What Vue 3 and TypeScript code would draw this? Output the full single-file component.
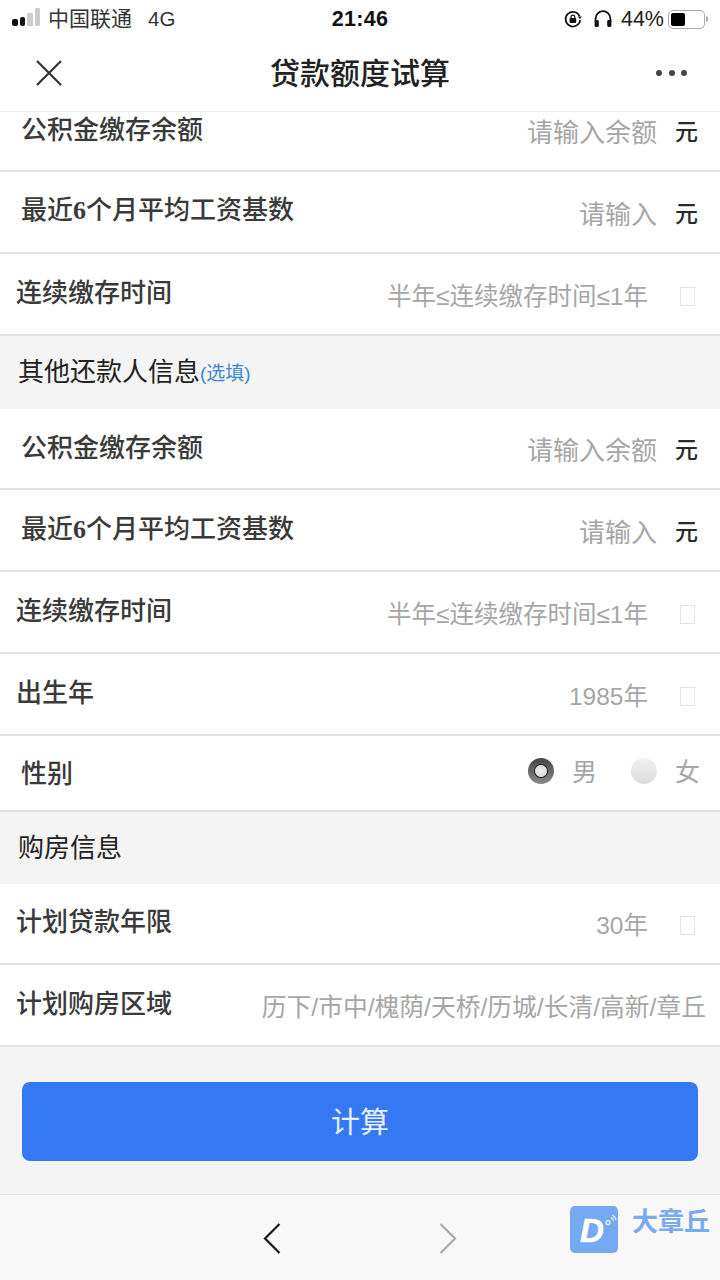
<template>
  <div class="page">
    <div class="status-bar">
      <div class="status-left">
        <span class="signal">
          <i class="bar on b1"></i><i class="bar on b2"></i><i class="bar b3"></i><i class="bar b4"></i>
        </span>
        <span class="carrier">中国联通</span>
        <span class="network">4G</span>
      </div>
      <div class="status-time">21:46</div>
      <div class="status-right">
        <svg class="lock-icon" width="20" height="20" viewBox="0 0 20 20">
          <path d="M16.6 7.2A7.3 7.3 0 1 0 17.2 11" fill="none" stroke="#111" stroke-width="1.7" />
          <path d="M14.6 7.4h4.4l-2.2 2.6z" fill="#111" />
          <rect x="6.6" y="9" width="6.6" height="5" rx="1" fill="#111" />
          <path d="M8 9.2V8a1.9 1.9 0 0 1 3.8 0v1.2" fill="none" stroke="#111" stroke-width="1.2" />
        </svg>
        <svg class="phones-icon" width="20" height="20" viewBox="0 0 20 20">
          <path d="M2.6 13V9.6a7.4 7.4 0 0 1 14.8 0V13" fill="none" stroke="#111" stroke-width="1.8" />
          <rect x="1.6" y="11" width="4.2" height="7" rx="1.4" fill="#111" />
          <rect x="14.2" y="11" width="4.2" height="7" rx="1.4" fill="#111" />
        </svg>
        <span class="battery-text">44%</span>
        <span class="battery"><i class="battery-fill"></i></span>
        <i class="battery-cap"></i>
      </div>
    </div>

    <header class="nav">
      <svg class="nav-close" width="28" height="28" viewBox="0 0 28 28">
        <path d="M2 2l24 24M26 2L2 26" stroke="#333" stroke-width="2.2" fill="none" />
      </svg>
      <h1 class="nav-title">贷款额度试算</h1>
      <div class="nav-more"><i></i><i></i><i></i></div>
    </header>

    <main class="scroller">
      <div class="form">
        <template v-for="block in blocks" :key="block.id">
          <div v-if="block.title" class="section-head" :class="block.headClass">
            {{ block.title }}<span v-if="block.note" class="section-note">{{ block.note }}</span>
          </div>
          <div v-for="row in block.rows" :key="row.label" class="row" :class="row.kind">
            <span class="row-label">
              <template v-for="part in splitLabel(row.label)" :key="part">
                <span v-if="/\d/.test(part)" class="row-digit">{{ part }}</span>
                <template v-else>{{ part }}</template>
              </template>
            </span>
            <template v-if="row.kind === 'gender'">
              <div class="gender">
                <span class="radio radio-on"></span><span class="gender-text">男</span>
                <span class="radio radio-off"></span><span class="gender-text">女</span>
              </div>
            </template>
            <template v-else>
              <span class="row-value">{{ row.value }}</span>
              <span v-if="row.kind === 'money'" class="row-unit">元</span>
              <span v-if="row.kind === 'pick'" class="row-check"></span>
            </template>
          </div>
        </template>
        <div class="submit-wrap">
          <button class="submit" type="button">计算</button>
        </div>
      </div>
    </main>

    <footer class="toolbar">
      <svg class="tool-back" width="20" height="32" viewBox="0 0 20 32">
        <path d="M17.5 2L3 16.5 17.5 31" fill="none" stroke="#1a1a1a" stroke-width="2.2" />
      </svg>
      <svg class="tool-forward" width="20" height="32" viewBox="0 0 20 32">
        <path d="M2.5 2L17 16.5 2.5 31" fill="none" stroke="#aaa" stroke-width="2.2" />
      </svg>
      <div class="watermark">
        <div class="logo-box">
          <span class="logo-d">D</span>
          <svg class="logo-wave" width="12" height="12" viewBox="0 0 12 12">
            <circle cx="3" cy="8.6" r="2" fill="none" stroke="#fff" stroke-width="1.1" />
            <path d="M6 3.6a5 5 0 0 1 2.6 3.2M7.6 1.2a7.6 7.6 0 0 1 3.4 4.6" fill="none" stroke="#fff" stroke-width="1.1" />
          </svg>
        </div>
        <span class="logo-name">大章丘</span>
      </div>
    </footer>
  </div>
</template>

<script setup lang="ts">
type RowKind = 'money' | 'pick' | 'gender' | 'plain'

interface Row {
  label: string
  value?: string
  kind: RowKind
}

interface Block {
  id: string
  title?: string
  note?: string
  headClass?: string
  rows: Row[]
}

const blocks: Block[] = [
  {
    id: 'main',
    rows: [
      { label: '公积金缴存余额', value: '请输入余额', kind: 'money' },
      { label: '最近6个月平均工资基数', value: '请输入', kind: 'money' },
      { label: '连续缴存时间', value: '半年≤连续缴存时间≤1年', kind: 'pick' },
    ],
  },
  {
    id: 'other',
    title: '其他还款人信息',
    note: '(选填)',
    rows: [
      { label: '公积金缴存余额', value: '请输入余额', kind: 'money' },
      { label: '最近6个月平均工资基数', value: '请输入', kind: 'money' },
      { label: '连续缴存时间', value: '半年≤连续缴存时间≤1年', kind: 'pick' },
      { label: '出生年', value: '1985年', kind: 'pick' },
      { label: '性别', kind: 'gender' },
    ],
  },
  {
    id: 'house',
    title: '购房信息',
    headClass: 'section-short',
    rows: [
      { label: '计划贷款年限', value: '30年', kind: 'pick' },
      { label: '计划购房区域', value: '历下/市中/槐荫/天桥/历城/长清/高新/章丘', kind: 'plain' },
    ],
  },
]

// digits in the labels are set in a bold serif, the rest stays CJK
const splitLabel = (label: string) => label.split(/(\d)/).filter(Boolean)
</script>

<style>
html,
body {
  margin: 0;
  background: #fff;
}
</style>

<style scoped>
.page {
  width: 720px;
  height: 1280px;
  display: flex;
  flex-direction: column;
  overflow: hidden;
  background: #f4f4f4;
  font-family: "Noto Sans CJK SC", "Noto Sans", sans-serif;
}

.status-bar {
  height: 38px;
  flex: none;
  display: flex;
  align-items: center;
  justify-content: space-between;
  background: #fff;
  color: #111;
  position: relative;
}

.status-left {
  display: flex;
  align-items: center;
  padding-left: 12px;
}

.signal {
  display: flex;
  align-items: flex-end;
  gap: 2px;
  height: 18px;
  margin-right: 8px;
  margin-bottom: 4px;
}

.bar {
  width: 5.5px;
  background: #ccc;
  border-radius: 1px;
}

.bar.on {
  background: #111;
}

.b1 { height: 7px; border-radius: 2px; }
.b2 { height: 9px; border-radius: 2px; }
.b3 { height: 13px; }
.b4 { height: 18px; }

.carrier {
  font-size: 21px;
  line-height: 20px;
  margin-bottom: 4px;
  color: #333;
}

.network {
  margin-left: 16px;
  font-family: "Liberation Sans", sans-serif;
  font-size: 20.5px;
  line-height: 20px;
  color: #333;
}

.status-time {
  position: absolute;
  left: 0;
  right: 0;
  text-align: center;
  font-family: "Liberation Sans", sans-serif;
  font-size: 21.5px;
  font-weight: 700;
  letter-spacing: 0.3px;
}

.status-right {
  display: flex;
  align-items: center;
  padding-right: 12px;
}

.phones-icon {
  margin-left: 10px;
}

.battery-text {
  margin-left: 8px;
  margin-right: 4px;
  font-family: "Liberation Sans", sans-serif;
  font-size: 21.5px;
  color: #222;
}

.battery {
  width: 37px;
  height: 19px;
  box-sizing: border-box;
  padding: 2px;
  border: 1.5px solid #aaa;
  border-radius: 5px;
  display: flex;
}

.battery-fill {
  width: 14px;
  background: #000;
  border-radius: 2px;
}

.battery-cap {
  width: 2px;
  height: 6px;
  margin-left: 1px;
  background: #aaa;
  border-radius: 0 2px 2px 0;
}

.nav {
  height: 74px;
  flex: none;
  box-sizing: border-box;
  padding: 0 36px 4px 35px;
  display: flex;
  align-items: center;
  justify-content: space-between;
  background: #fff;
  border-bottom: 1px solid #ececec;
  position: relative;
  z-index: 1;
}

.nav-title {
  position: absolute;
  left: 0;
  right: 0;
  margin: -4px 0 0;
  text-align: center;
  font-size: 30px;
  line-height: 40px;
  font-weight: 500;
  color: #222;
  pointer-events: none;
}

.nav-more {
  display: flex;
  gap: 6.5px;
  margin-right: -3px;
}

.nav-more i {
  width: 6px;
  height: 6px;
  background: #444;
  border-radius: 50%;
}

.scroller {
  flex: 1;
  min-height: 0;
  overflow: hidden;
}

.form {
  margin-top: -21.75px;
}

.row {
  height: 81.75px;
  box-sizing: border-box;
  display: flex;
  align-items: center;
  padding: 0 22px 0 17px;
  background: #fff;
  border-bottom: 2px solid #e2e2e2;
}

.row.money,
.row.gender {
  padding-left: 22px;
}

.row.gender {
  height: 76px;
  padding-bottom: 4px;
}

.row-label {
  font-size: 26px;
  line-height: 36px;
  font-weight: 500;
  color: #3a3a3a;
  margin-bottom: 6px;
  margin-left: -1px;
  white-space: nowrap;
}

.row.money .row-label {
  margin-bottom: 4px;
}

.row-digit {
  font-family: "Liberation Serif", serif;
  font-weight: 700;
}

.row-value {
  margin-left: auto;
  margin-top: 6px;
  font-family: "Liberation Sans", "Noto Sans CJK SC", sans-serif;
  font-size: 26px;
  line-height: 36px;
  color: #a6a6a6;
  white-space: nowrap;
}

.row.pick .row-value {
  font-size: 24.5px;
}

.row.plain .row-value {
  font-size: 24.75px;
}

.row.plain {
  padding-right: 14px;
}

.row-unit {
  margin-left: 18px;
  font-size: 23px;
  line-height: 36px;
  font-weight: 500;
  color: #2a2a2a;
}

.row-check {
  flex: none;
  width: 15px;
  height: 19px;
  box-sizing: border-box;
  margin-left: 32px;
  margin-right: 3px;
  margin-top: 5px;
  border: 1px solid #e4e4e4;
}

.row.gender .row-label {
  margin-top: 2px;
  margin-bottom: 0;
}

.gender {
  margin-left: auto;
  margin-right: -1px;
  display: flex;
  align-items: center;
}

.gender-text {
  font-size: 25px;
  line-height: 34px;
  margin-bottom: 2px;
  color: #a6a6a6;
  margin-left: 18px;
}

.radio {
  width: 26px;
  height: 26px;
  border-radius: 50%;
  box-sizing: border-box;
}

.radio-on {
  background:
    radial-gradient(circle, #efefef 0, #dcdcdc 5.5px, #222 6.5px, transparent 7.5px),
    linear-gradient(#444, #8a8a8a);
}

.radio-off {
  margin-left: 34px;
  background: linear-gradient(#f2f2f2, #dcdcdc);
}

.section-head {
  height: 73px;
  box-sizing: border-box;
  padding: 0 18px 6px;
  display: flex;
  align-items: center;
  font-size: 26px;
  color: #222;
  background: #f4f4f4;
}

.section-short {
  height: 72px;
  padding-bottom: 4px;
}

.section-note {
  font-family: "Liberation Sans", "Noto Sans CJK SC", sans-serif;
  font-size: 19px;
  color: #3f86d0;
  margin-top: 4px;
}

.submit-wrap {
  padding: 35px 22px 0;
}

.submit {
  display: block;
  width: 100%;
  height: 79px;
  padding: 0 0 3px;
  border: none;
  border-radius: 8px;
  background: #3478f4;
  color: #e6efff;
  font-family: inherit;
  font-size: 29px;
}

.toolbar {
  height: 86px;
  flex: none;
  box-sizing: border-box;
  display: flex;
  align-items: center;
  background: #f8f8f8;
  border-top: 1px solid #e6e6e6;
  position: relative;
}

.tool-back {
  margin-left: 262px;
}

.tool-forward {
  margin-left: 156px;
}

.watermark {
  position: absolute;
  left: 570px;
  top: 11px;
  display: flex;
  align-items: flex-start;
}

.logo-box {
  width: 48px;
  height: 47px;
  border-radius: 5px;
  background: #75a9f2;
  position: relative;
  overflow: hidden;
}

.logo-d {
  position: absolute;
  left: 10px;
  top: 10px;
  font-family: "Liberation Sans", sans-serif;
  font-size: 33px;
  line-height: 30px;
  font-weight: 700;
  font-style: italic;
  color: #fff;
  -webkit-text-stroke: 0.6px #fff;
}

.logo-wave {
  position: absolute;
  right: 1px;
  top: 8px;
}

.logo-name {
  margin-left: 14px;
  margin-top: -4px;
  font-size: 26px;
  line-height: 36px;
  font-weight: 700;
  color: #7aaaf0;
}
</style>
